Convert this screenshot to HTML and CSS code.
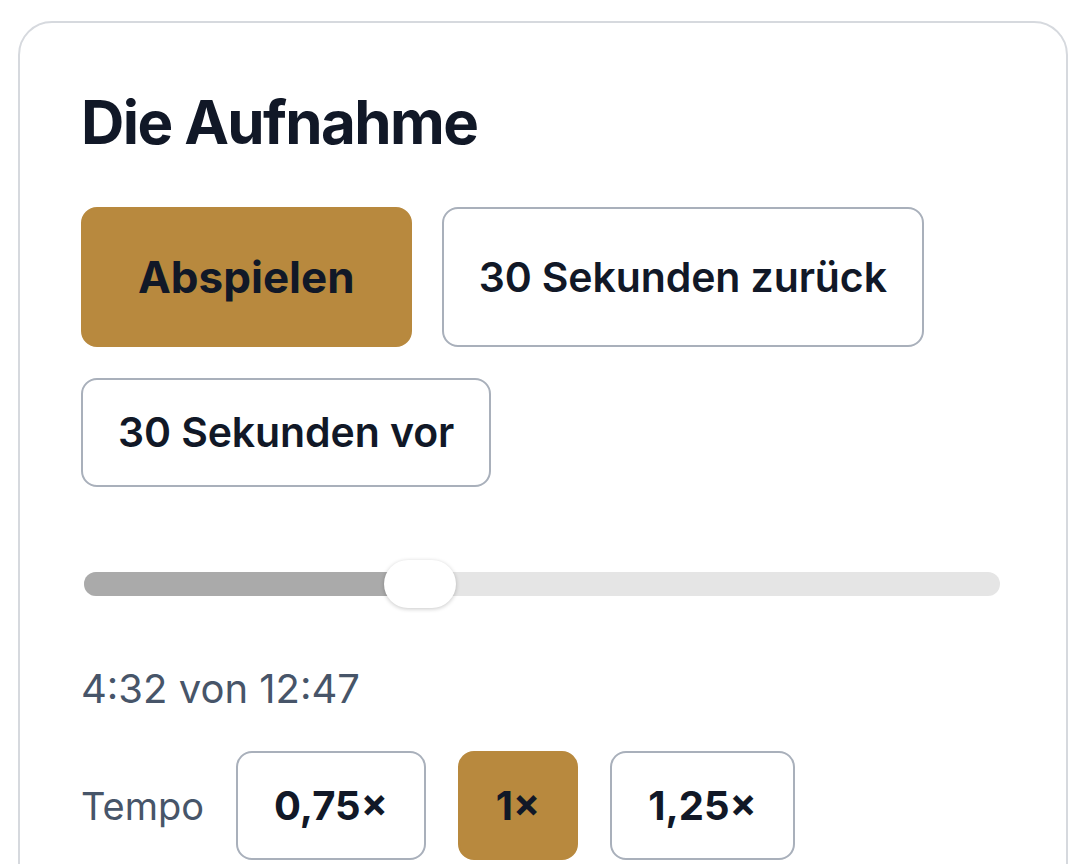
FILE: index.html
```html
<!DOCTYPE html>
<html lang="de">
<head>
<meta charset="utf-8">
<title>Die Aufnahme</title>
<link rel="stylesheet" href="styles.css">
</head>
<body>
<section class="card">
  <h1 class="title">Die Aufnahme</h1>
  <div class="controls">
    <button class="btn btn-primary">Abspielen</button>
    <button class="btn btn-outline">30 Sekunden zurück</button>
    <button class="btn btn-outline">30 Sekunden vor</button>
  </div>
  <div class="slider">
    <div class="track">
      <div class="fill" style="width: 36.5%"></div>
    </div>
    <div class="thumb" style="left: 303px"></div>
  </div>
  <p class="time">4:32 von 12:47</p>
  <div class="tempo">
    <span class="tempo-label">Tempo</span>
    <button class="btn btn-speed">0,75×</button>
    <button class="btn btn-speed btn-primary">1×</button>
    <button class="btn btn-speed">1,25×</button>
  </div>
</section>
</body>
</html>
```

FILE: styles.css
```css
* { box-sizing: border-box; }

html, body {
  margin: 0;
  background: #ffffff;
}

body {
  padding: 21px 18px 0 18px;
  font-family: Inter, "Noto Sans", "Liberation Sans", sans-serif;
  color: #111827;
}

.card {
  border: 2px solid #d6d9de;
  border-radius: 34px;
  padding: 63px 60px 60px 61px;
  min-height: 1000px;
}

.title {
  margin: 0;
  font-size: 60px;
  line-height: 72px;
  font-weight: 700;
  letter-spacing: -1.6px;
  color: #111827;
}

.controls {
  margin-top: 49px;
  display: flex;
  flex-wrap: wrap;
  column-gap: 30px;
  row-gap: 31px;
}

.btn {
  font-family: inherit;
  color: #111827;
  background: #ffffff;
  border: 2px solid #a9b0bb;
  border-radius: 16px;
  font-weight: 600;
  cursor: pointer;
}

.btn-outline {
  font-size: 41px;
  line-height: 49px;
  padding: 28px 35px;
  letter-spacing: -0.1px;
}

.btn-primary {
  background: #b8893e;
  border-color: #b8893e;
}

.controls .btn-primary {
  font-size: 44px;
  line-height: 56px;
  font-weight: 700;
  padding: 40px 55px;
}

.slider {
  position: relative;
  margin-top: 73px;
  height: 48px;
  width: 919px;
}

.track {
  position: absolute;
  left: 3px;
  right: 0;
  top: 12px;
  height: 24px;
  border-radius: 12px;
  background: #e5e5e5;
  overflow: hidden;
}

.fill {
  height: 100%;
  background: #aaaaaa;
}

.thumb {
  position: absolute;
  top: 0;
  width: 72px;
  height: 48px;
  border-radius: 24px;
  background: #ffffff;
  box-shadow: 0 1px 4px rgba(0, 0, 0, 0.22);
}

.time {
  margin: 57px 0 0 0;
  font-size: 40px;
  line-height: 48px;
  color: #475569;
  font-weight: 400;
}

.tempo {
  margin-top: 38px;
  display: flex;
  align-items: center;
  gap: 32px;
}

.tempo-label {
  font-size: 38px;
  line-height: 48px;
  color: #475569;
}

.btn-speed {
  font-size: 40px;
  line-height: 49px;
  padding: 28px 36px;
  font-weight: 700;
}
```
